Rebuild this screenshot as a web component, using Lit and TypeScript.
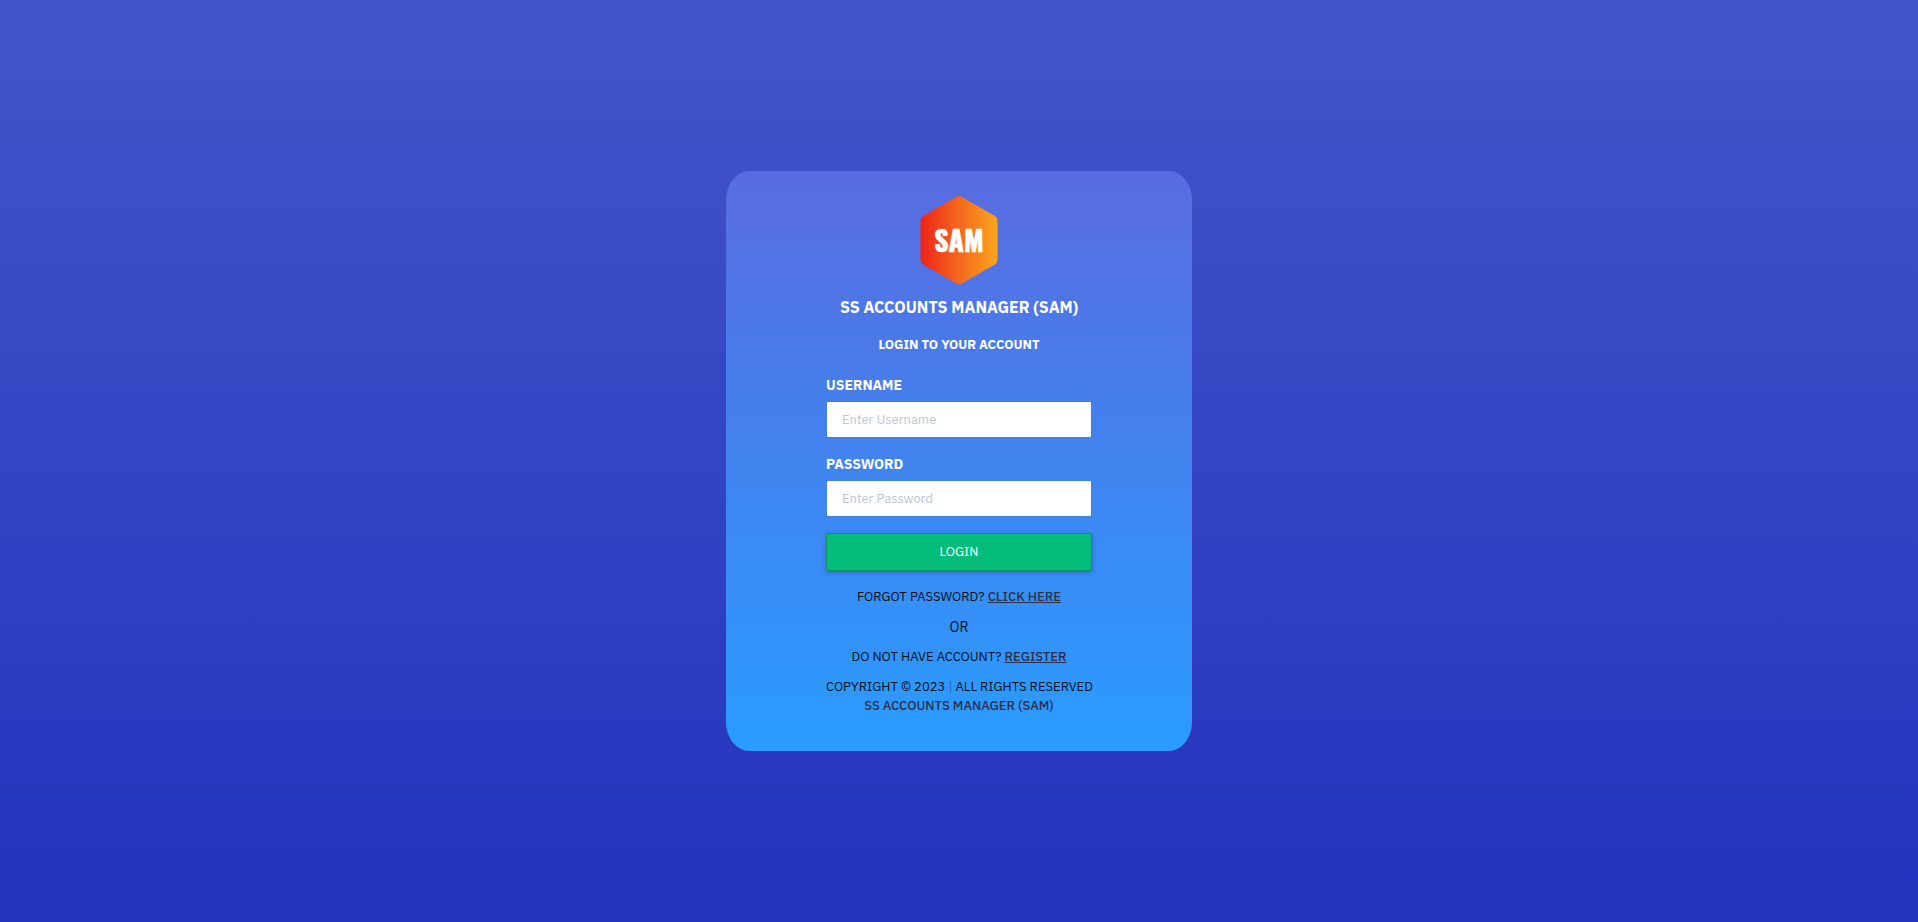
import { LitElement, html, css } from "lit";
import { customElement } from "lit/decorators.js";

@customElement("sam-logo")
class SamLogo extends LitElement {
  static styles = css`
    :host {
      display: block;
      line-height: 0;
    }
    .word {
      font-family: Oswald, "Roboto Condensed", Roboto, sans-serif;
      font-size: 28px;
      font-weight: 700;
      fill: #fff;
      stroke: #fff;
      stroke-width: 0.6px;
    }
  `;

  render() {
    return html`
      <svg width="78" height="90" viewBox="0 0 78 90" role="img" aria-label="SAM logo">
        <defs>
          <linearGradient id="flame" x1="0" y1="0" x2="1" y2="0">
            <stop offset="0" stop-color="#ee2318" />
            <stop offset="0.5" stop-color="#f3681e" />
            <stop offset="1" stop-color="#fba51f" />
          </linearGradient>
        </defs>
        <path
          fill="url(#flame)"
          d="M37 1.6Q39 .4 41 1.6L74.500 20.800Q77.500 22.600 77.500 25.500V65Q77.500 68 74.500 69.800L41 88.900Q39 90 37 88.900L3.500 69.800Q.5 68 .5 65V25.500Q.5 22.600 3.500 20.800Z"
        />
        <text class="word" x="39" y="57" text-anchor="middle">SAM</text>
      </svg>
    `;
  }
}

@customElement("app-root")
class AppRoot extends LitElement {
  static styles = css`
    :host {
      display: flex;
      align-items: center;
      justify-content: center;
      min-height: 100vh;
      box-sizing: border-box;
      background: linear-gradient(#4455c9, #2233be);
      font-family: "IBM Plex Sans", Roboto, "Noto Sans", sans-serif;
      font-size: 13px;
      line-height: 20px;
      color: #0c1118;
    }
    .card {
      box-sizing: border-box;
      display: flex;
      flex-direction: column;
      width: 466px;
      max-width: 100%;
      padding: 24px 100px 36px;
      border-radius: 5%;
      background: linear-gradient(#596be0, #299cff);
    }
    .logo {
      align-self: center;
    }
    h1,
    h2,
    p {
      margin: 0;
      text-align: center;
      text-transform: uppercase;
    }
    h1,
    h2,
    label {
      font-weight: 700;
      color: #fff;
    }
    h1 {
      margin-top: 10px;
      font-size: 16px;
      line-height: 24px;
    }
    h2 {
      margin-top: 16px;
      font-size: 13px;
    }
    form {
      display: flex;
      flex-direction: column;
      gap: 16px;
      margin: 20px 0 16px;
    }
    .field {
      display: flex;
      flex-direction: column;
      gap: 6px;
    }
    label {
      font-size: 14px;
      text-transform: uppercase;
    }
    input,
    button {
      box-sizing: border-box;
      width: 100%;
      margin: 0;
      border-radius: 2px;
      font: inherit;
    }
    input {
      height: 37px;
      padding: 0 15px;
      border: 1px solid rgba(72, 94, 144, 0.16);
      background: #fff;
      background-clip: padding-box;
      color: #1b2e4b;
      outline: none;
    }
    input::placeholder {
      color: #bcc5d8;
      opacity: 1;
    }
    button {
      height: 38px;
      border: 1px solid #15905f;
      background: #04bd7a;
      color: #fff;
      box-shadow: 0 2px 5px rgba(0, 0, 0, 0.22);
      cursor: pointer;
    }
    .links {
      display: flex;
      flex-direction: column;
      gap: 10px;
    }
    .or {
      font-size: 14px;
    }
    .links a {
      font-weight: 500;
      color: #2b2f48;
      text-decoration: underline;
    }
    .copyright {
      line-height: 19px;
      white-space: nowrap;
    }
    .links .home {
      text-decoration: none;
    }
    .bar {
      color: #1a62bd;
    }
  `;

  render() {
    return html`
      <main class="card">
        <sam-logo class="logo"></sam-logo>
        <h1>SS Accounts Manager (SAM)</h1>
        <h2>Login to your account</h2>
        <form @submit=${(e: Event) => e.preventDefault()}>
          <div class="field">
            <label for="username">Username</label>
            <input id="username" type="text" placeholder="Enter Username" autocomplete="username" />
          </div>
          <div class="field">
            <label for="password">Password</label>
            <input id="password" type="password" placeholder="Enter Password" autocomplete="current-password" />
          </div>
          <button type="submit">LOGIN</button>
        </form>
        <div class="links">
          <p>Forgot password? <a href="#forgot">Click here</a></p>
          <p class="or">Or</p>
          <p>Do not have account? <a href="#register">Register</a></p>
          <p class="copyright">
            Copyright © 2023 <span class="bar">|</span> All rights reserved<br />
            <a class="home" href="#home">SS Accounts Manager (SAM)</a>
          </p>
        </div>
      </main>
    `;
  }
}
